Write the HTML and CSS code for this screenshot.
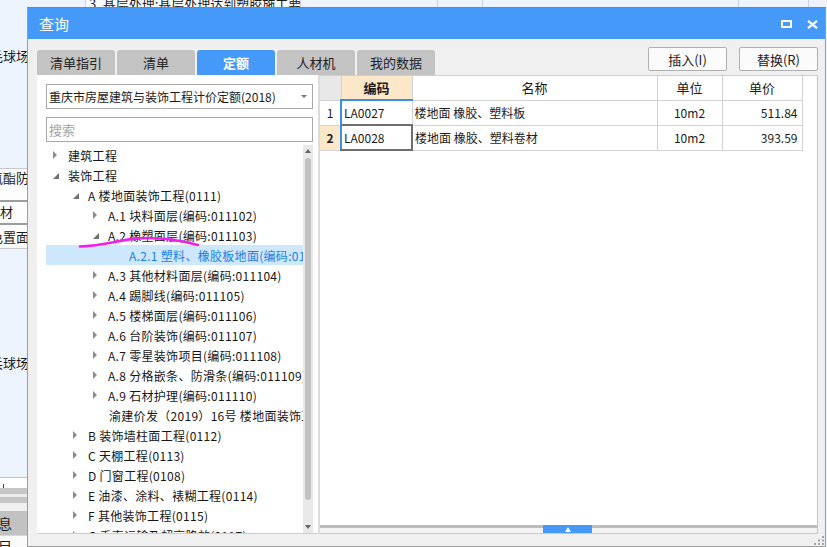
FILE: index.html
```html
<!DOCTYPE html>
<html lang="zh-CN">
<head>
<meta charset="utf-8">
<title>查询</title>
<link rel="stylesheet" href="styles.css">
</head>
<body>
<div class="desk">
  <div class="bg-top">
    <div class="bg-cell bg-c1"></div>
    <div class="bg-cell bg-c2">3. 基层处理:基层处理达到塑胶施工要求</div>
    <div class="bg-cell bg-c3"></div>
    <div class="bg-cell bg-c4"></div>
    <div class="bg-cell bg-c5"></div>
    <div class="bg-cell bg-c6"></div>
    <div class="bg-cell bg-c7"></div>
  </div>
  <div class="bg-left">
    <div class="bl bl-1"><div class="bl-text">羽毛球场</div></div>
    <div class="bl bl-a"><div class="bl-text">聚氨酯防</div></div>
    <div class="bl bl-b"><div class="bl-text start">材</div></div>
    <div class="bl bl-c"><div class="bl-text">颜色置面</div></div>
    <div class="bl bl-2"><div class="bl-text">乒乓球场</div></div>
    <div class="bl bl-w"><span class="tick"></span></div>
    <div class="bl bl-g1"></div>
    <div class="bl bl-g2"></div>
    <div class="bl bl-g3"></div>
    <div class="bl bl-g4"></div>
    <div class="bl bl-tab"><div class="bl-tabtext">信息</div></div>
    <div class="bl bl-end"><div class="bl-tabtext">项目</div></div>
  </div>
</div>

<div class="dialog">
  <div class="titlebar">
    <div class="title">查询</div>
    <div class="tb-max"></div>
    <svg class="tb-close" width="11" height="9" viewBox="0 0 11 9"><path d="M1 0.8L10 8.2M10 0.8L1 8.2" stroke="#fff" stroke-width="2.2" fill="none"/></svg>
  </div>
  <div class="dbody">
    <div class="toolbar">
      <div class="tabs">
        <div class="tab">清单指引</div>
        <div class="tab">清单</div>
        <div class="tab active">定额</div>
        <div class="tab">人材机</div>
        <div class="tab">我的数据</div>
      </div>
      <div class="tools">
        <div class="btn">插入(I)</div>
        <div class="btn">替换(R)</div>
      </div>
    </div>
    <div class="content">
      <div class="left">
        <div class="select"><span class="sel-text">重庆市房屋建筑与装饰工程计价定额(2018)</span><span class="sel-arrow"></span></div>
        <div class="search">搜索</div>
        <div class="tree-wrap">
          <div class="tree">
            <div class="row l0"><span class="ar c"></span>建筑工程</div>
            <div class="row l0"><span class="ar e"></span>装饰工程</div>
            <div class="row l1"><span class="ar e"></span>A 楼地面装饰工程(0111)</div>
            <div class="row l2"><span class="ar c"></span>A.1 块料面层(编码:011102)</div>
            <div class="row l2"><span class="ar e"></span>A.2 橡塑面层(编码:011103)</div>
            <div class="row l3 leaf sel">A.2.1 塑料、橡胶板地面(编码:011103001)</div>
            <div class="row l2"><span class="ar c"></span>A.3 其他材料面层(编码:011104)</div>
            <div class="row l2"><span class="ar c"></span>A.4 踢脚线(编码:011105)</div>
            <div class="row l2"><span class="ar c"></span>A.5 楼梯面层(编码:011106)</div>
            <div class="row l2"><span class="ar c"></span>A.6 台阶装饰(编码:011107)</div>
            <div class="row l2"><span class="ar c"></span>A.7 零星装饰项目(编码:011108)</div>
            <div class="row l2"><span class="ar c"></span>A.8 分格嵌条、防滑条(编码:011109)</div>
            <div class="row l2"><span class="ar c"></span>A.9 石材护理(编码:011110)</div>
            <div class="row l2 leaf">渝建价发（2019）16号 楼地面装饰工程</div>
            <div class="row l1"><span class="ar c"></span>B 装饰墙柱面工程(0112)</div>
            <div class="row l1"><span class="ar c"></span>C 天棚工程(0113)</div>
            <div class="row l1"><span class="ar c"></span>D 门窗工程(0108)</div>
            <div class="row l1"><span class="ar c"></span>E 油漆、涂料、裱糊工程(0114)</div>
            <div class="row l1"><span class="ar c"></span>F 其他装饰工程(0115)</div>
            <div class="row l1"><span class="ar c"></span>G 垂直运输及超高降效(0117)</div>
          </div>
          <div class="vscroll">
            <div class="sb-up"></div>
            <div class="sb-thumb"></div>
            <div class="sb-down"></div>
          </div>
        </div>
      </div>
      <div class="split"></div>
      <div class="right">
        <table class="grid">
          <colgroup>
            <col class="w-num"><col class="w-code"><col class="w-name"><col class="w-unit"><col class="w-price">
          </colgroup>
          <thead>
            <tr>
              <th class="corner"></th>
              <th class="h-code">编码</th>
              <th>名称</th>
              <th>单位</th>
              <th>单价</th>
            </tr>
          </thead>
          <tbody>
            <tr>
              <td class="num">1</td>
              <td class="code">LA0027</td>
              <td class="name">楼地面 橡胶、塑料板</td>
              <td class="unit">10m2</td>
              <td class="price">511.84</td>
            </tr>
            <tr>
              <td class="num cur">2</td>
              <td class="code selcell">LA0028</td>
              <td class="name">楼地面 橡胶、塑料卷材</td>
              <td class="unit">10m2</td>
              <td class="price">393.59</td>
            </tr>
          </tbody>
        </table>
        <div class="blank"></div>
        <div class="splitter">
          <div class="sp-seg first"></div>
          <div class="sp-handle"><span class="sp-tri"></span></div>
          <div class="sp-seg"></div>
        </div>
      </div>
    </div>
  </div>
  <svg class="grip" width="10" height="9" viewBox="0 0 10 9">
    <rect x="8" y="0" width="2" height="2" fill="#a6a6a6"/>
    <rect x="4" y="3.5" width="2" height="2" fill="#a6a6a6"/>
    <rect x="8" y="3.5" width="2" height="2" fill="#a6a6a6"/>
    <rect x="0" y="7" width="2" height="2" fill="#a6a6a6"/>
    <rect x="4" y="7" width="2" height="2" fill="#a6a6a6"/>
    <rect x="8" y="7" width="2" height="2" fill="#a6a6a6"/>
  </svg>
</div>

<svg class="mark" width="827" height="547" viewBox="0 0 827 547">
  <path d="M80 246.5 C 98 246, 115 241.5, 134 238.6 C 154 236.8, 178 239.5, 198 245" stroke="#f01ef0" stroke-width="2.6" fill="none" stroke-linecap="round"/>
</svg>
</body>
</html>
```

FILE: styles.css
```css
* { box-sizing: border-box; }
html, body { margin: 0; padding: 0; }
body {
  width: 827px;
  height: 547px;
  overflow: hidden;
  position: relative;
  background: #eef4fd;
  font-family: "Noto Sans CJK SC", "Noto Sans", sans-serif;
  font-size: 12px;
  color: #1b1b1b;
}

/* ---------- background application ---------- */
.desk { width: 827px; }
.bg-top { display: flex; height: 20px; margin-top: -6px; }
.bg-cell {
  border-left: 1px solid #c9d2de;
  line-height: 20px;
  font-size: 13px;
  white-space: nowrap;
  overflow: hidden;
}
.bg-c1 { width: 85px; border-left: none; }
.bg-c2 { width: 215px; background: #fbfcfe; padding-left: 3px; }
.bg-c3 { width: 137px; }
.bg-c4 { width: 45px; }
.bg-c5 { width: 256px; }
.bg-c6 { width: 70px; }
.bg-c7 { flex: 1; }

.bg-left { width: 29px; display: flex; flex-direction: column; }
.bl { overflow: hidden; }
.bl-text {
  display: flex;
  justify-content: flex-end;
  white-space: nowrap;
  font-size: 13px;
  line-height: 16px;
}
.bl-text.start { justify-content: flex-start; }
.bl-1 { height: 154px; padding-top: 34px; }
.bl-a { height: 32px; border-top: 1px solid #c8c8c8; background: #fdfdfd; padding-top: 1px; }
.bl-b { height: 23px; border-top: 2px solid #9c9c9c; background: #fdfdfd; padding-top: 2px; }
.bl-c { height: 26px; border-top: 2px solid #9c9c9c; border-bottom: 1px solid #c8c8c8; background: #fdfdfd; padding-top: 4px; }
.bl-2 { height: 228px; padding-top: 106px; }
.bl-w { height: 11px; background: #fff; border-top: 1px solid #c4c4c4; position: relative; }
.tick { display: block; width: 1px; height: 4px; background: #444; margin: 6px 0 0 3px; }
.bl-g1 { height: 6px; background: #c6c6c6; }
.bl-g2 { height: 3px; background: #ececec; }
.bl-g3 { height: 6px; background: #c6c6c6; }
.bl-g4 { height: 8px; background: #f0f0f0; }
.bl-tab { height: 24px; background: #c2c2c2; display: flex; align-items: center; }
.bl-end { height: 14px; background: #fbfbfb; display: flex; align-items: flex-start; border-top: 1px solid #d8d8d8; }
.bl-tabtext {
  width: 12px;
  display: flex;
  justify-content: flex-end;
  white-space: nowrap;
  font-size: 14px;
  overflow: hidden;
}

/* ---------- dialog ---------- */
.dialog {
  position: absolute;
  left: 27px;
  top: 7px;
  width: 799px;
  height: 540px;
  border: 1px solid #9c9c9c;
  border-top-color: #4a8fe0;
  background: #f0f0f0;
  display: flex;
  flex-direction: column;
}
.titlebar {
  height: 31px;
  flex: none;
  background: #4499f9;
  color: #fff;
  display: flex;
  align-items: center;
  padding: 0 7px 0 11px;
  font-size: 15px;
}
.title { flex: 1; }
.tb-max {
  width: 11px;
  height: 8px;
  border: 2px solid #fff;
  margin-right: 15px;
  margin-top: 1px;
}
.tb-close { display: block; margin-top: 1px; }

.dbody {
  flex: 1;
  display: flex;
  flex-direction: column;
  padding: 8px 7px 0 9px;
}
.toolbar { height: 28px; display: flex; flex: none; }
.tabs { display: flex; gap: 2px; align-self: flex-end; }
.tab {
  width: 78px;
  height: 25px;
  background: #c3c3c3;
  border-radius: 3px 3px 0 0;
  display: flex;
  align-items: center;
  justify-content: center;
  font-size: 13px;
  color: #222;
}
.tab.active { background: #4499f9; color: #fff; font-weight: bold; }
.tools { margin-left: auto; display: flex; gap: 12px; align-self: flex-start; }
.btn {
  width: 79px;
  height: 24px;
  border: 1px solid #b0b0b0;
  border-radius: 2px;
  background: #fbfbfb;
  font-size: 13px;
  color: #222;
  display: flex;
  align-items: center;
  justify-content: center;
}

.content { height: 459px; display: flex; flex: none; }

/* left panel */
.left {
  width: 281px;
  flex: none;
  background: #fff;
  padding: 9px 5px 0 9px;
  display: flex;
  flex-direction: column;
  border-bottom: 1px solid #cdcdcd;
}
.select {
  height: 25px;
  flex: none;
  border: 1px solid #a9a9a9;
  display: flex;
  align-items: center;
  padding: 0 5px 0 2px;
  font-size: 12px;
  white-space: nowrap;
}
.sel-text { flex: 1; overflow: hidden; }
.sel-arrow {
  width: 0;
  height: 0;
  border-top: 3px solid #777;
  border-left: 3px solid transparent;
  border-right: 3px solid transparent;
}
.search {
  height: 25px;
  flex: none;
  margin-top: 8px;
  border: 1px solid #a9a9a9;
  color: #a3a3a3;
  font-size: 13px;
  padding-left: 2px;
  display: flex;
  align-items: center;
}
.tree-wrap { flex: 1; min-height: 0; margin-top: 3px; display: flex; overflow: hidden; }
.tree { width: 257px; flex: none; overflow: hidden; }
.row {
  height: 20px;
  display: flex;
  align-items: center;
  white-space: nowrap;
  font-size: 12px;
  letter-spacing: 0.3px;
  color: #161616;
}
.row.l0 { padding-left: 7px; }
.row.l1 { padding-left: 27px; }
.row.l2 { padding-left: 47px; }
.row.l3 { padding-left: 67px; }
.row.leaf.l2 { padding-left: 63px; }
.row.leaf.l3 { padding-left: 83px; }
.row.sel { background: #cde8fc; color: #1d7ee6; }
.ar { width: 15px; height: 20px; flex: none; display: flex; align-items: center; }
.ar.c::before {
  content: "";
  width: 0;
  height: 0;
  border-left: 4px solid #8c8c8c;
  border-top: 4px solid transparent;
  border-bottom: 4px solid transparent;
}
.ar.e::before {
  content: "";
  width: 0;
  height: 0;
  border-bottom: 6px solid #6f6f6f;
  border-left: 6px solid transparent;
  margin-top: 2px;
}

.vscroll {
  width: 10px;
  flex: none;
  background: #e9e9e9;
  display: flex;
  flex-direction: column;
  align-items: center;
}
.sb-up { height: 12px; display: flex; align-items: center; }
.sb-up::before {
  content: "";
  border-bottom: 4px solid #666;
  border-left: 3px solid transparent;
  border-right: 3px solid transparent;
}
.sb-thumb { width: 6px; height: 342px; background: #c2c2c2; border-radius: 3px; margin-top: 1px; }
.sb-down { margin-top: auto; height: 12px; display: flex; align-items: center; }
.sb-down::before {
  content: "";
  border-top: 4px solid #666;
  border-left: 3px solid transparent;
  border-right: 3px solid transparent;
}

.split { width: 2px; flex: none; background: #dcdcdc; }

/* right panel */
.right {
  flex: 1;
  background: #fff;
  border-top: 1px solid #cfcfcf;
  border-right: 1px solid #c4c4c4;
  border-bottom: 1px solid #cdcdcd;
  display: flex;
  flex-direction: column;
}
.grid { border-collapse: collapse; table-layout: fixed; width: 482px; }
.w-num { width: 21px; }
.w-code { width: 71px; }
.w-name { width: 245px; }
.w-unit { width: 65px; }
.w-price { width: 80px; }
.grid th, .grid td {
  border: 1px solid #d3d3d3;
  padding: 0;
  height: 25px;
  white-space: nowrap;
  overflow: hidden;
}
.grid th {
  border-top: none;
  height: 24px;
  font-weight: normal;
  font-size: 13px;
  text-align: center;
  color: #1b1b1b;
}
.grid th:first-child, .grid td:first-child { border-left: none; }
.grid th.corner { background: #e8e8e8; }
.grid th.h-code { background: #fde7c9; font-weight: bold; border-bottom: 2px solid #3d8ee8; }
.grid td { font-size: 12px; }
.grid td.num { text-align: center; background: #fff; }
.grid td.num.cur { background: #fde7c9; font-weight: bold; }
.grid td.code { padding-left: 2px; border-left: 2px solid #3d8ee8; }
.grid td.code.selcell { border: 2px solid #6e6e6e; border-left: 2px solid #3d8ee8; }
.grid td.name { padding-left: 2px; }
.grid td.unit { text-align: center; }
.grid td.price { text-align: right; padding-right: 4px; }
.blank { flex: 1; }
.splitter { height: 8px; display: flex; flex: none; }
.sp-seg { flex: 1; border-top: 3px solid #bdbdbd; background: #f3f3f3; }
.sp-seg.first { flex: none; width: 223px; }
.sp-handle {
  width: 49px;
  background: #4499f9;
  display: flex;
  align-items: center;
  justify-content: center;
}
.sp-tri {
  width: 0;
  height: 0;
  border-bottom: 5px solid #fff;
  border-left: 3px solid transparent;
  border-right: 3px solid transparent;
}

.grip { position: absolute; right: 1px; bottom: 1px; }
.mark { position: absolute; left: 0; top: 0; pointer-events: none; }
```
